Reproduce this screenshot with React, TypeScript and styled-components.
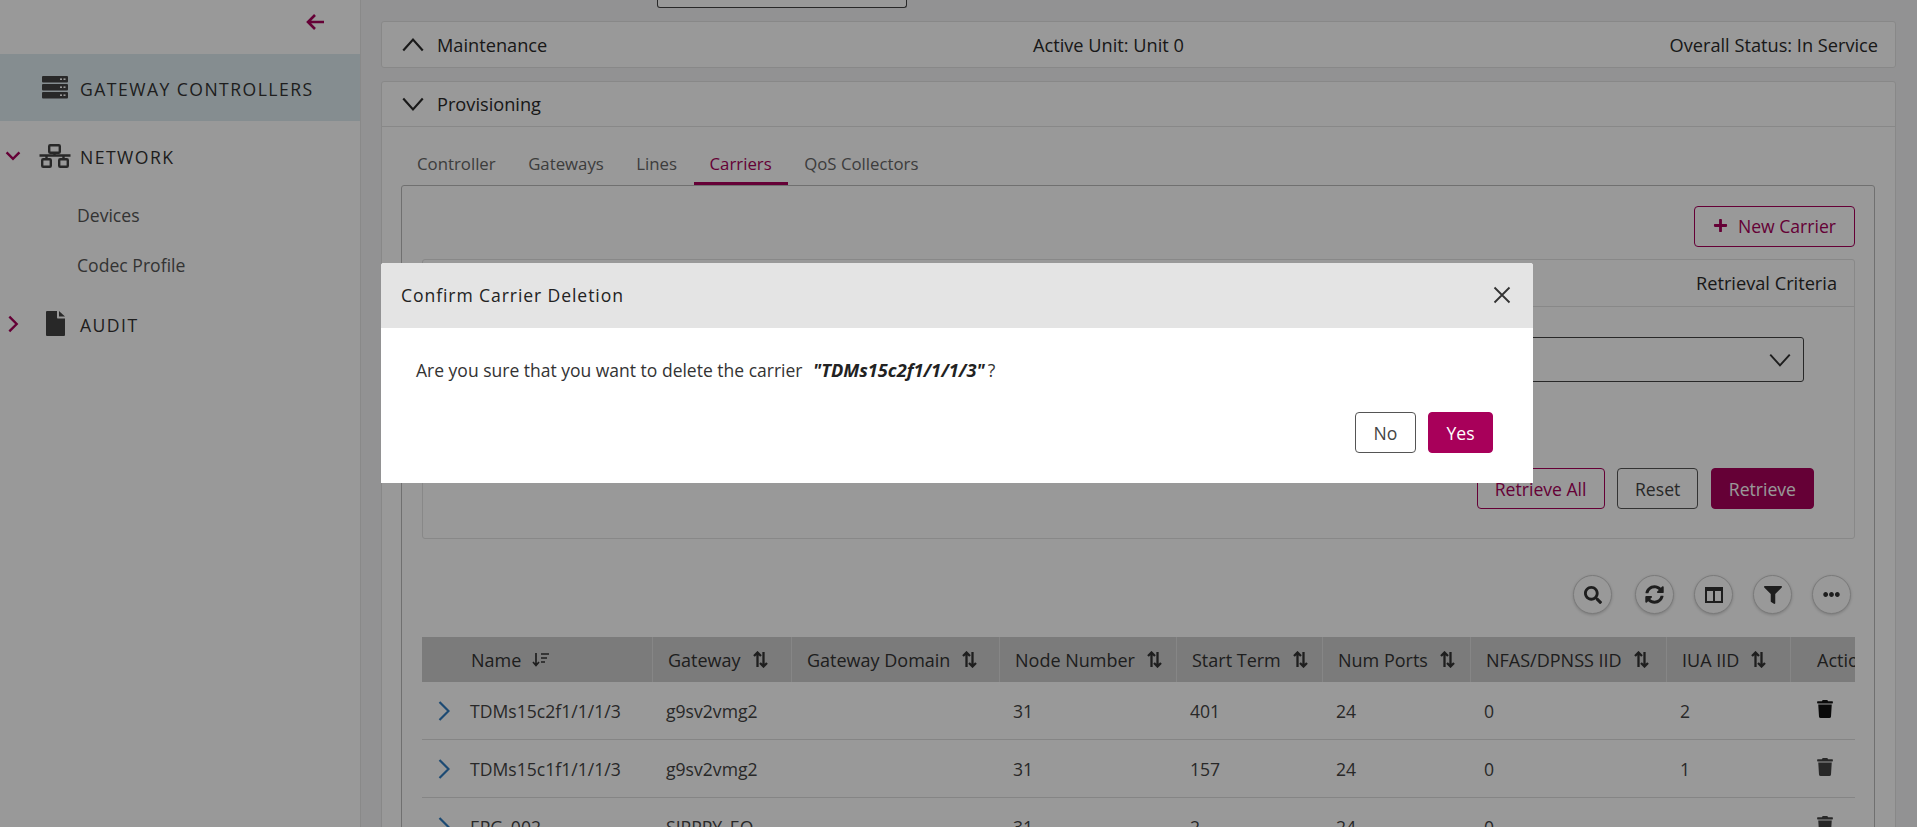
import React from 'react';
import styled, { createGlobalStyle } from 'styled-components';
import { FaSearch, FaSyncAlt, FaFilter, FaEllipsisH, FaTrash, FaPlus } from 'react-icons/fa';

const Global = createGlobalStyle`
  html, body { margin: 0; padding: 0; height: 827px; overflow: hidden; background: #f4f4f5; }
  body { font-family: "Open Sans", "Liberation Sans", sans-serif; color: #333; }
  #root { height: 827px; }
  * { box-sizing: border-box; }
`;

const Page = styled.div`
  display: flex;
  width: 1917px;
  height: 827px;
  overflow: hidden;
  position: relative;
`;

const Sidebar = styled.aside`
  width: 361px;
  flex: none;
  height: 827px;
  background: #fff;
  border-right: 1px solid #e4e4e4;
`;

const CollapseRow = styled.div`
  height: 54px;
  display: flex;
  justify-content: flex-end;
  align-items: flex-start;
  padding: 13px 35px 0 0;
  color: #a8005a;
`;

const NavRow = styled.div<{ $active?: boolean; $h: number }>`
  height: ${p => p.$h}px;
  display: grid;
  grid-template-columns: 30px 48px 1fr;
  column-gap: 1px;
  align-items: center;
  background: ${p => (p.$active ? '#deebf0' : 'transparent')};
`;

const NavToggle = styled.span`
  display: flex;
  padding-left: 2px;
  color: #a8005a;
`;

const NavIcon = styled.span`
  display: flex;
  justify-content: center;
  color: #444;
`;

const NavLabel = styled.span`
  font-size: 17.6px;
  letter-spacing: 1.45px;
  color: #333;
  padding-top: 3px;
`;

const SubItem = styled.div`
  height: 50px;
  padding-left: 77px;
  display: flex;
  align-items: center;
  font-size: 17.6px;
  color: #555;
`;

const Main = styled.main`
  flex: 1;
  min-width: 0;
  padding: 0 21px 0 20px;
`;

const TopStub = styled.div`
  margin-left: 276px;
  width: 250px;
  height: 8px;
  border: 1px solid #444;
  border-top: none;
  border-radius: 0 0 3px 3px;
  background: #fff;
  margin-bottom: 13px;
`;

const Panel = styled.section`
  background: #fff;
  border: 1px solid #e3e3e3;
  border-radius: 3px;
`;

const SpacedPanel = styled(Panel)`
  margin-bottom: 13px;
`;

const PanelHead = styled.header<{ $h: number }>`
  height: ${p => p.$h}px;
  display: flex;
  justify-content: space-between;
  align-items: center;
  padding: 0 17px 0 18px;
  font-size: 18.2px;
  color: #2a2a2a;
`;

const HeadLeft = styled.div`
  display: flex;
  align-items: center;
  gap: 11px;
`;

const ProvBody = styled.div`
  border-top: 1px solid #e3e3e3;
  padding: 20px 20px 0 19px;
  height: 760px;
`;

const Tabs = styled.nav`
  display: flex;
  height: 38px;
`;

const Tab = styled.div<{ $active?: boolean }>`
  padding: 5px 16.5px 0 16px;
  font-size: 16.8px;
  font-weight: 500;
  color: ${p => (p.$active ? '#a8005a' : '#666')};
  border-bottom: ${p => (p.$active ? '3px solid #a8005a' : '3px solid transparent')};
`;

const TabBox = styled.div`
  border: 1px solid #bbb;
  border-radius: 3px 3px 0 0;
  padding: 20px 19px 0 20px;
  height: 700px;
`;

const NewRow = styled.div`
  display: flex;
  justify-content: flex-end;
  height: 53px;
`;

const Btn = styled.button<{ $kind: 'outline' | 'plain' | 'solid' }>`
  height: 41px;
  padding: 0 18px;
  border-radius: 4px;
  font-family: inherit;
  font-size: 17.6px;
  display: inline-flex;
  align-items: center;
  gap: 10px;
  background: ${p => (p.$kind === 'solid' ? '#a8005a' : '#fff')};
  color: ${p => (p.$kind === 'solid' ? '#fff' : p.$kind === 'outline' ? '#a8005a' : '#444')};
  border: 1px solid ${p => (p.$kind === 'plain' ? '#555' : '#a8005a')};
`;

const NewBtn = styled(Btn)`
  padding-bottom: 2px;
`;

const ActionBtn = styled(Btn)`
  padding: 0 17px;
`;

const CriteriaPanel = styled(Panel)`
  height: 280px;
  margin-bottom: 36px;
`;

const CriteriaHead = styled.div`
  height: 47px;
  border-bottom: 1px solid #e3e3e3;
  display: flex;
  align-items: center;
  justify-content: flex-end;
  padding-right: 17px;
  font-size: 18.2px;
  font-weight: 500;
  color: #2a2a2a;
`;

const CriteriaBody = styled.div`
  display: flex;
  flex-direction: column;
  align-items: flex-end;
  padding: 30px 50px 0 0;
`;

const SelectBox = styled.div`
  width: 400px;
  height: 45px;
  border: 1px solid #444;
  border-radius: 3px;
  display: flex;
  align-items: center;
  justify-content: flex-end;
  padding-right: 10px;
  color: #333;
  margin-bottom: 86px;
`;

const Actions = styled.div`
  display: flex;
  gap: 12.5px;
  margin-right: -10px;
`;

const ToolRow = styled.div`
  display: flex;
  justify-content: flex-end;
  gap: 20px;
  padding-right: 4px;
  height: 62px;
`;

const Round = styled.span`
  width: 39px;
  height: 39px;
  border-radius: 50%;
  border: 1px solid #ccc;
  box-shadow: 0 1px 3px rgba(0, 0, 0, 0.2);
  display: flex;
  align-items: center;
  justify-content: center;
  background: #fff;
  color: #333;
`;

const SearchRound = styled(Round)`
  margin-right: 3px;
`;

const TableClip = styled.div`
  overflow: hidden;
  width: 100%;
`;

const columns = '230px 139px 208px 177px 146px 148px 196px 124px 80px';

const HeadRow = styled.div`
  display: grid;
  grid-template-columns: ${columns};
  height: 45px;
  background: #cdcdcd;
  width: 1448px;
`;

const HeadCell = styled.div<{ $pad: number; $plain?: boolean }>`
  display: flex;
  align-items: center;
  gap: 11px;
  padding-left: ${p => p.$pad}px;
  font-size: 18px;
  font-weight: 500;
  color: #333;
  border-left: ${p => (p.$plain ? 'none' : '1px solid #e0e0e0')};
  white-space: nowrap;
`;

const BodyRow = styled.div`
  display: grid;
  grid-template-columns: ${columns};
  height: 58px;
  width: 1448px;
  border-bottom: 1px solid #dedede;
  align-items: center;
  font-size: 17.6px;
  color: #444;
`;

const NameCell = styled.div`
  display: flex;
  align-items: center;
  padding-left: 16px;
  gap: 20px;
  color: #307cc0;
`;

const NameText = styled.span`
  color: #444;
`;

const Cell = styled.div`
  padding-left: 14px;
`;

const TrashCell = styled.div<{ $dark?: boolean }>`
  padding: 0 0 3px 26px;
  display: flex;
  color: ${p => (p.$dark ? '#111' : '#444')};
`;

const Overlay = styled.div`
  position: absolute;
  inset: 0;
  background: rgba(0, 0, 0, 0.4);
  padding: 263px 0 0 381px;
`;

const Modal = styled.div`
  width: 1152px;
  height: 220px;
  background: #fff;
  border-radius: 3px 3px 0 0;
`;

const ModalHead = styled.div`
  height: 65px;
  background: #e4e4e4;
  border-radius: 3px 3px 0 0;
  display: flex;
  align-items: center;
  justify-content: space-between;
  padding: 0 21px 1px 20px;
`;

const ModalTitle = styled.div`
  font-size: 17.6px;
  font-weight: 500;
  letter-spacing: 0.9px;
  color: #222;
`;

const ModalText = styled.div`
  padding: 30px 0 0 35px;
  font-size: 17.5px;
  color: #333;
  height: 84px;
  line-height: 24px;
`;

const Quoted = styled.em`
  font-size: 18.2px;
  font-weight: 700;
  font-style: italic;
  color: #222;
  margin: 0 3px 0 6px;
`;

const ModalActions = styled.div`
  display: flex;
  justify-content: flex-end;
  gap: 12px;
  padding-right: 40px;
`;

const ModalBtn = styled(Btn)`
  justify-content: center;
  padding: 0;
  width: ${p => (p.$kind === 'solid' ? '65px' : '61px')};
  font-weight: ${p => (p.$kind === 'solid' ? 500 : 400)};
`;

const Chevron = ({ d, size = 18, w = 2 }: { d: string; size?: number; w?: number }) => (
  <svg width={size} height={size} viewBox="0 0 24 24" fill="none" stroke="currentColor" strokeWidth={w}>
    <path d={d} />
  </svg>
);

const RowChevron = () => (
  <svg width="12" height="20" viewBox="0 0 12 20" fill="none" stroke="currentColor" strokeWidth="2.2">
    <path d="M1.5 1l9 9-9 9" />
  </svg>
);

const BackArrow = () => (
  <svg width="20" height="18" viewBox="0 0 20 18" fill="none" stroke="currentColor" strokeWidth="2.6">
    <path d="M19 9H3M10 2 3 9l7 7" />
  </svg>
);

const ServerIcon = () => (
  <svg width="26" height="23" viewBox="0 0 26 23" fill="currentColor">
    <rect x="0" y="0" width="26" height="6.5" rx="1" />
    <rect x="0" y="8" width="26" height="6.5" rx="1" />
    <rect x="0" y="16" width="26" height="6.5" rx="1" />
    <g fill="#fff">
      <rect x="18" y="2.4" width="2" height="1.6" />
      <rect x="21.5" y="2.4" width="2" height="1.6" />
      <rect x="18" y="10.4" width="2" height="1.6" />
      <rect x="21.5" y="10.4" width="2" height="1.6" />
      <rect x="18" y="18.4" width="2" height="1.6" />
      <rect x="21.5" y="18.4" width="2" height="1.6" />
    </g>
  </svg>
);

const NetworkIcon = () => (
  <svg width="32" height="26" viewBox="0 0 32 26" fill="none" stroke="currentColor" strokeWidth="2.4">
    <rect x="10.2" y="2.2" width="10.6" height="7.6" rx="1" />
    <path d="M15.5 10v3M0.5 12.5h31M7.5 12.5v3M24.5 12.5v3" />
    <rect x="3.2" y="16.2" width="8.6" height="7.6" rx="1" />
    <rect x="20.2" y="16.2" width="8.6" height="7.6" rx="1" />
  </svg>
);

const FileIcon = () => (
  <svg width="19" height="25" viewBox="0 0 19 25" fill="currentColor">
    <path d="M1 0h10v6.5c0 .5.4 1 1 1h7V24a1 1 0 0 1-1 1H1a1 1 0 0 1-1-1V1a1 1 0 0 1 1-1Z" />
    <path d="M13 0l6 5.5h-6Z" />
  </svg>
);

const SortBoth = () => (
  <svg width="17" height="17" viewBox="0 0 17 17" fill="none" stroke="currentColor" strokeWidth="2.3">
    <path d="M5.5 16V2M2 5 5.5 1.5 9 5M11.5 1v14M8 12l3.5 3.5L15 12" />
  </svg>
);

const SortDesc = () => (
  <svg width="17" height="15" viewBox="0 0 17 15" fill="none" stroke="currentColor" strokeWidth="1.7">
    <path d="M4 1v12M1 10l3 3.5L7 10M9 2h8M9 6h6M9 10h4" />
  </svg>
);

const ColumnsIcon = () => (
  <svg width="18" height="16" viewBox="0 0 18 16" fill="none" stroke="currentColor">
    <rect x="1" y="1" width="16" height="14" strokeWidth="2" />
    <path d="M1 2.5h16" strokeWidth="3" />
    <path d="M9 2v13" strokeWidth="2" />
  </svg>
);

const headers = ['Gateway', 'Gateway Domain', 'Node Number', 'Start Term', 'Num Ports', 'NFAS/DPNSS IID', 'IUA IID'];

const rows = [
  { name: 'TDMs15c2f1/1/1/3', gw: 'g9sv2vmg2', node: '31', start: '401', ports: '24', nfas: '0', iua: '2', dark: true },
  { name: 'TDMs15c1f1/1/1/3', gw: 'g9sv2vmg2', node: '31', start: '157', ports: '24', nfas: '0', iua: '1' },
  { name: 'EPG_002', gw: 'SIPPPY_EQ', node: '31', start: '2', ports: '24', nfas: '0', iua: '' },
];

export default function App() {
  return (
    <Page>
      <Global />
      <Sidebar>
        <CollapseRow><BackArrow /></CollapseRow>
        <NavRow $active $h={67}>
          <span />
          <NavIcon><ServerIcon /></NavIcon>
          <NavLabel>GATEWAY CONTROLLERS</NavLabel>
        </NavRow>
        <NavRow $h={69}>
          <NavToggle><Chevron d="M5 8l7 7 7-7" size={22} w={2.6} /></NavToggle>
          <NavIcon><NetworkIcon /></NavIcon>
          <NavLabel>NETWORK</NavLabel>
        </NavRow>
        <SubItem>Devices</SubItem>
        <SubItem>Codec Profile</SubItem>
        <NavRow $h={67}>
          <NavToggle><Chevron d="M8 4l8 8-8 8" size={22} w={2.6} /></NavToggle>
          <NavIcon><FileIcon /></NavIcon>
          <NavLabel>AUDIT</NavLabel>
        </NavRow>
      </Sidebar>
      <Main>
        <TopStub />
        <SpacedPanel>
          <PanelHead $h={45}>
            <HeadLeft><Chevron d="M3 17l9-10 9 10" size={26} w={2} /> Maintenance</HeadLeft>
            <div>Active Unit: Unit 0</div>
            <div>Overall Status: In Service</div>
          </PanelHead>
        </SpacedPanel>
        <Panel>
          <PanelHead $h={44}>
            <HeadLeft><Chevron d="M3 7l9 10 9-10" size={26} w={2} /> Provisioning</HeadLeft>
          </PanelHead>
          <ProvBody>
            <Tabs>
              <Tab>Controller</Tab>
              <Tab>Gateways</Tab>
              <Tab>Lines</Tab>
              <Tab $active>Carriers</Tab>
              <Tab>QoS Collectors</Tab>
            </Tabs>
            <TabBox>
              <NewRow>
                <NewBtn $kind="outline"><FaPlus size={15} /> New Carrier</NewBtn>
              </NewRow>
              <CriteriaPanel>
                <CriteriaHead>Retrieval Criteria</CriteriaHead>
                <CriteriaBody>
                  <SelectBox><Chevron d="M3 7l9 10 9-10" size={26} w={1.8} /></SelectBox>
                  <Actions>
                    <ActionBtn $kind="outline">Retrieve All</ActionBtn>
                    <ActionBtn $kind="plain">Reset</ActionBtn>
                    <ActionBtn $kind="solid">Retrieve</ActionBtn>
                  </Actions>
                </CriteriaBody>
              </CriteriaPanel>
              <ToolRow>
                <SearchRound><FaSearch size={18} /></SearchRound>
                <Round><FaSyncAlt size={19} /></Round>
                <Round><ColumnsIcon /></Round>
                <Round><FaFilter size={18} /></Round>
                <Round><FaEllipsisH size={17} /></Round>
              </ToolRow>
              <TableClip>
                <HeadRow>
                  <HeadCell $pad={49} $plain>Name <SortDesc /></HeadCell>
                  {headers.map(h => <HeadCell key={h} $pad={15}>{h} <SortBoth /></HeadCell>)}
                  <HeadCell $pad={26}>Action</HeadCell>
                </HeadRow>
                {rows.map(r => (
                  <BodyRow key={r.name}>
                    <NameCell>
                      <RowChevron />
                      <NameText>{r.name}</NameText>
                    </NameCell>
                    <Cell>{r.gw}</Cell>
                    <Cell />
                    <Cell>{r.node}</Cell>
                    <Cell>{r.start}</Cell>
                    <Cell>{r.ports}</Cell>
                    <Cell>{r.nfas}</Cell>
                    <Cell>{r.iua}</Cell>
                    <TrashCell $dark={r.dark}><FaTrash size={18} /></TrashCell>
                  </BodyRow>
                ))}
              </TableClip>
            </TabBox>
          </ProvBody>
        </Panel>
      </Main>
      <Overlay>
        <Modal>
          <ModalHead>
            <ModalTitle>Confirm Carrier Deletion</ModalTitle>
            <Chevron d="M3 3l18 18M21 3 3 21" size={20} w={2.2} />
          </ModalHead>
          <ModalText>
            Are you sure that you want to delete the carrier <Quoted>"TDMs15c2f1/1/1/3"</Quoted>?
          </ModalText>
          <ModalActions>
            <ModalBtn $kind="plain">No</ModalBtn>
            <ModalBtn $kind="solid">Yes</ModalBtn>
          </ModalActions>
        </Modal>
      </Overlay>
    </Page>
  );
}
